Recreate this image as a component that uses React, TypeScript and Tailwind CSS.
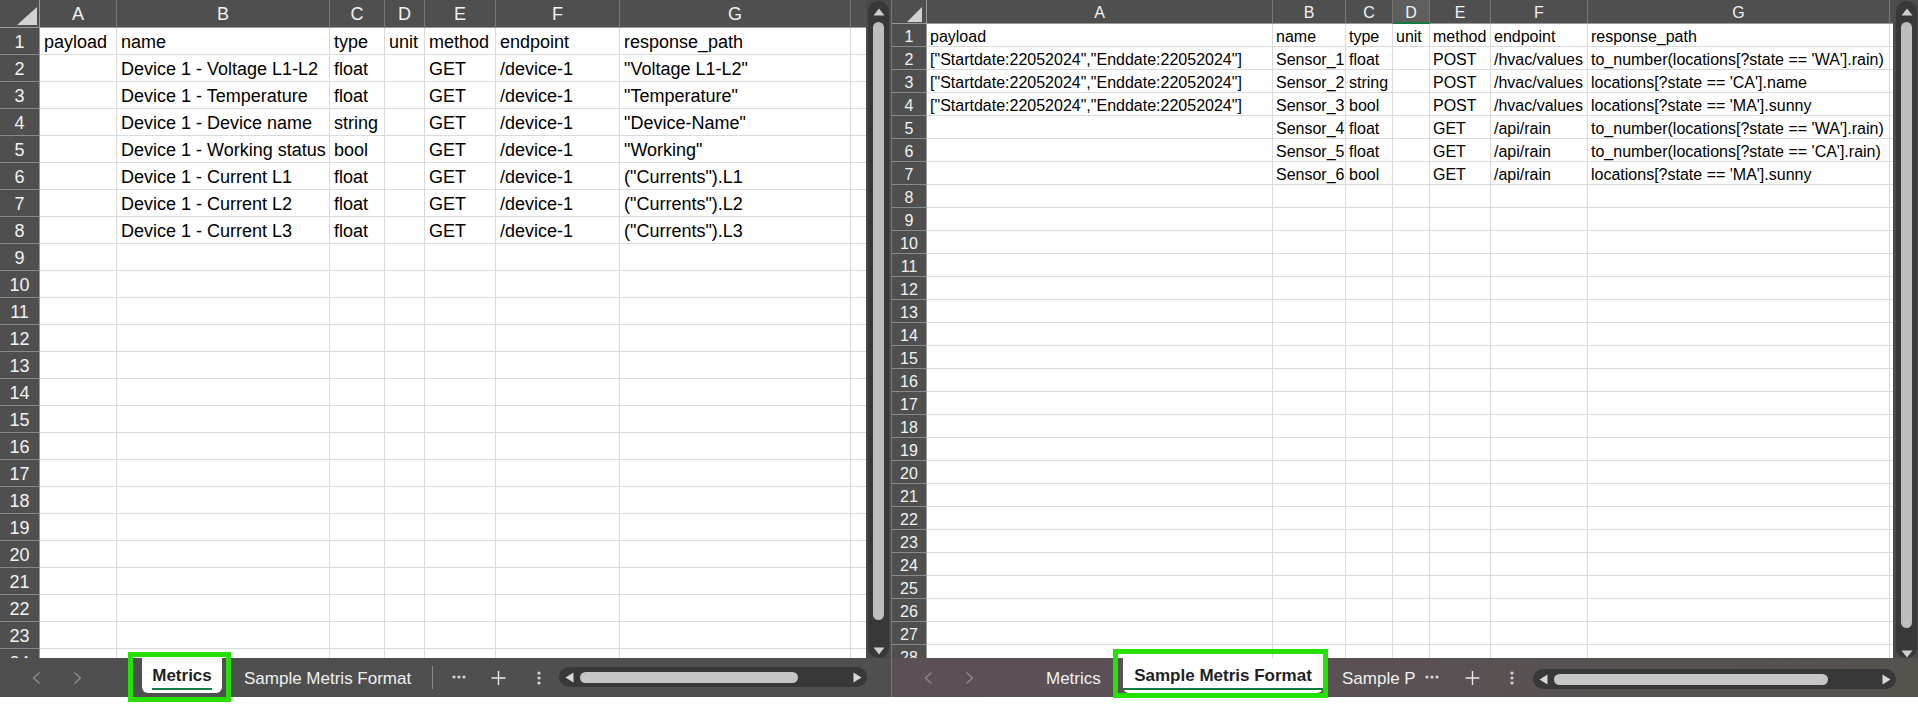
import React from 'react';
import clsx from 'clsx';

type Col = { letter: string; w: string };

// last column only peeks in at the edge, so it gets no letter
const leftCols: Col[] = [
  { letter: 'A', w: 'w-[77px]' },
  { letter: 'B', w: 'w-[213px]' },
  { letter: 'C', w: 'w-[55px]' },
  { letter: 'D', w: 'w-[40px]' },
  { letter: 'E', w: 'w-[71px]' },
  { letter: 'F', w: 'w-[124px]' },
  { letter: 'G', w: 'w-[231px]' },
  { letter: '', w: 'w-[80px]' },
];

const rightCols: Col[] = [
  { letter: 'A', w: 'w-[346px]' },
  { letter: 'B', w: 'w-[73px]' },
  { letter: 'C', w: 'w-[47px]' },
  { letter: 'D', w: 'w-[37px]' },
  { letter: 'E', w: 'w-[61px]' },
  { letter: 'F', w: 'w-[97px]' },
  { letter: 'G', w: 'w-[302px]' },
  { letter: '', w: 'w-[80px]' },
];

const leftRows: string[][] = [
  ['payload', 'name', 'type', 'unit', 'method', 'endpoint', 'response_path'],
  ['', 'Device 1 - Voltage L1-L2', 'float', '', 'GET', '/device-1', '"Voltage L1-L2"'],
  ['', 'Device 1 - Temperature', 'float', '', 'GET', '/device-1', '"Temperature"'],
  ['', 'Device 1 - Device name', 'string', '', 'GET', '/device-1', '"Device-Name"'],
  ['', 'Device 1 - Working status', 'bool', '', 'GET', '/device-1', '"Working"'],
  ['', 'Device 1 - Current L1', 'float', '', 'GET', '/device-1', '("Currents").L1'],
  ['', 'Device 1 - Current L2', 'float', '', 'GET', '/device-1', '("Currents").L2'],
  ['', 'Device 1 - Current L3', 'float', '', 'GET', '/device-1', '("Currents").L3'],
];

const payload = '["Startdate:22052024","Enddate:22052024"]';

const rightRows: string[][] = [
  ['payload', 'name', 'type', 'unit', 'method', 'endpoint', 'response_path'],
  [payload, 'Sensor_1', 'float', '', 'POST', '/hvac/values', "to_number(locations[?state == 'WA'].rain)"],
  [payload, 'Sensor_2', 'string', '', 'POST', '/hvac/values', "locations[?state == 'CA'].name"],
  [payload, 'Sensor_3', 'bool', '', 'POST', '/hvac/values', "locations[?state == 'MA'].sunny"],
  ['', 'Sensor_4', 'float', '', 'GET', '/api/rain', "to_number(locations[?state == 'WA'].rain)"],
  ['', 'Sensor_5', 'float', '', 'GET', '/api/rain', "to_number(locations[?state == 'CA'].rain)"],
  ['', 'Sensor_6', 'bool', '', 'GET', '/api/rain', "locations[?state == 'MA'].sunny"],
];

const sizes = {
  big: {
    rowHdr: 'w-[40px]',
    head: 'h-[28px] leading-[29px] text-[18px]',
    row: 'h-[27px] leading-[29px] text-[18px]',
    pad: 'pl-[4px]',
    corner: 'M37 7 L37 25 L17 25 Z',
  },
  small: {
    rowHdr: 'w-[35px]',
    head: 'h-[24px] leading-[25px] text-[16px]',
    row: 'h-[23px] leading-[25px] text-[16px]',
    pad: 'pl-[3px]',
    corner: 'M30 7 L30 22 L15 22 Z',
  },
};

interface SheetProps {
  cols: Col[];
  rows: string[][];
  rowCount: number;
  size: 'big' | 'small';
  activeCol?: string;
}

const Sheet: React.FC<SheetProps> = ({ cols, rows, rowCount, size, activeCol }) => {
  const s = sizes[size];
  return (
    <div className="h-[658px] flex-1 overflow-hidden bg-white">
      {/* column letters */}
      <div className={clsx('flex', s.head)}>
        <div className={clsx(s.rowHdr, 'relative shrink-0 border-r border-b border-[#9a9a9a] bg-[#4f4f4f]')}>
          <svg className="absolute inset-0" width="40" height="28">
            <path d={s.corner} fill="#d2d2d2" />
          </svg>
        </div>
        {cols.map((c, j) => (
          <div
            key={j}
            className={clsx(
              c.w,
              'shrink-0 border-r border-r-[#767676] text-center text-[#f2f2f2]',
              c.letter && c.letter === activeCol
                ? 'border-b-2 border-b-[#107c41] bg-[#5e5e5e]'
                : 'border-b border-b-[#9a9a9a] bg-[#4f4f4f]'
            )}
          >
            {c.letter}
          </div>
        ))}
      </div>

      {/* rows */}
      {Array.from({ length: rowCount }).map((_, i) => (
        <div key={i} className={clsx('flex', s.row)}>
          <div
            className={clsx(
              s.rowHdr,
              'shrink-0 border-r border-r-[#9a9a9a] border-b border-b-[#8a8a8a] bg-[#4f4f4f] text-center text-[#f2f2f2]'
            )}
          >
            {i + 1}
          </div>
          {cols.map((c, j) => (
            <div
              key={j}
              className={clsx(
                c.w,
                s.pad,
                'shrink-0 overflow-hidden whitespace-nowrap border-r border-b border-[#dadada] text-black'
              )}
            >
              {rows[i]?.[j] ?? ''}
            </div>
          ))}
        </div>
      ))}
    </div>
  );
};

const VScroll: React.FC<{ thumb: string; gap: string; offset: string }> = ({ thumb, gap, offset }) => (
  <div className="h-[658px] w-[25px] shrink-0 bg-[#4a4a4a] pt-[1px]">
    <div className={clsx(offset, 'flex h-[657px] w-[21px] flex-col items-center rounded-full bg-[#383838] pt-[7px]')}>
      <svg width="12" height="8" viewBox="0 0 12 8">
        <path d="M6 0.5 L11.5 7.5 L0.5 7.5 Z" fill="#cfcfcf" />
      </svg>
      <div className={clsx(thumb, 'mt-[6px] w-[11px] rounded-full bg-[#bdbdbd]')} />
      <svg className={gap} width="12" height="8" viewBox="0 0 12 8">
        <path d="M0.5 0.5 L11.5 0.5 L6 7.5 Z" fill="#cfcfcf" />
      </svg>
    </div>
  </div>
);

const Chevron = ({ dir }: { dir: 'l' | 'r' }) => (
  <svg width="9" height="12" viewBox="0 0 9 12" fill="none">
    <polyline
      points={dir === 'l' ? '7.5,0.5 1.5,6 7.5,11.5' : '1.5,0.5 7.5,6 1.5,11.5'}
      stroke="#8e8e8e"
      strokeWidth="1.2"
    />
  </svg>
);

const Nav = () => (
  <div className="flex h-full w-[128px] shrink-0 items-start pt-[14px]">
    <div className="ml-[32px]">
      <Chevron dir="l" />
    </div>
    <div className="ml-[32px]">
      <Chevron dir="r" />
    </div>
  </div>
);

const Dots = () => (
  <svg className="mt-[17px] shrink-0" width="14" height="4" viewBox="0 0 14 4">
    <circle cx="2" cy="2" r="1.6" fill="#d6d6d6" />
    <circle cx="7" cy="2" r="1.6" fill="#d6d6d6" />
    <circle cx="12" cy="2" r="1.6" fill="#d6d6d6" />
  </svg>
);

const Plus = () => (
  <svg className="mt-[13px] shrink-0" width="15" height="14" viewBox="0 0 15 14">
    <path d="M7.5 0 V14 M0.5 7 H14.5" stroke="#e8e8e8" strokeWidth="1.4" />
  </svg>
);

const VDots = () => (
  <svg className="mt-[13px] shrink-0" width="4" height="14" viewBox="0 0 4 14">
    <circle cx="2" cy="2" r="1.6" fill="#d6d6d6" />
    <circle cx="2" cy="7" r="1.6" fill="#d6d6d6" />
    <circle cx="2" cy="12" r="1.6" fill="#d6d6d6" />
  </svg>
);

const HScroll: React.FC<{ w: string; thumb: string; top: string }> = ({ w, thumb, top }) => (
  <div className={clsx(w, top, 'flex h-[20px] shrink-0 items-center rounded-full bg-[#383838] pl-[6px] pr-[5px]')}>
    <svg width="9" height="11" viewBox="0 0 9 11">
      <path d="M8.5 0.5 L8.5 10.5 L0.5 5.5 Z" fill="#d8d8d8" />
    </svg>
    <div className={clsx(thumb, 'ml-[6px] h-[11px] rounded-full bg-[#c6c6c6]')} />
    <svg className="ml-auto" width="9" height="11" viewBox="0 0 9 11">
      <path d="M0.5 0.5 L0.5 10.5 L8.5 5.5 Z" fill="#d8d8d8" />
    </svg>
  </div>
);

const ActiveTab: React.FC<{ label: string; tab: string; box: string }> = ({ label, tab, box }) => (
  <div className="relative h-full shrink-0">
    <div className={clsx(tab, 'flex h-[35px] flex-col items-center rounded-b-[6px] bg-white pt-[8px]')}>
      <span className="text-[17px] font-bold leading-[20px] text-[#1f1f1f]">{label}</span>
      <div className="mt-[2px] h-[2px] w-full bg-[#107c41]" />
    </div>
    {/* highlight box around the active sheet tab */}
    <div className={clsx(box, 'absolute border-[5px] border-[#25e000]')} />
  </div>
);

export default function App() {
  return (
    <div className="flex h-[704px] w-[1918px] flex-col overflow-hidden bg-white font-['Liberation_Sans',Arial,sans-serif]">
      <div className="flex h-[697px]">
        {/* left window */}
        <div className="flex w-[891px] shrink-0 flex-col">
          <div className="flex h-[658px]">
            <Sheet cols={leftCols} rows={leftRows} rowCount={24} size="big" />
            <VScroll thumb="h-[598px]" gap="mt-[27px]" offset="ml-[2px]" />
          </div>
          <div className="flex h-[39px] items-start bg-[#4f4f4f]">
            <Nav />
            <div className="w-[103px] shrink-0">
              <ActiveTab
                label="Metrics"
                tab="ml-[14px] w-[80px] px-[10px]"
                box="left-0 top-[-6px] h-[50px] w-[103px]"
              />
            </div>
            <div className="w-[201px] shrink-0 pl-[13px] pt-[11px] text-[17px] leading-[20px] whitespace-nowrap text-[#f0f0f0]">
              Sample Metris Format
            </div>
            <div className="mt-[8px] h-[23px] w-px shrink-0 bg-[#8a8a8a]" />
            <div className="ml-[19px] flex">
              <Dots />
            </div>
            <div className="ml-[25px] flex">
              <Plus />
            </div>
            <div className="ml-[31px] flex">
              <VDots />
            </div>
            <div className="ml-[18px] flex">
              <HScroll w="w-[308px]" thumb="w-[218px]" top="mt-[9px]" />
            </div>
          </div>
        </div>

        <div className="w-px shrink-0 bg-[#7a7a7a]" />

        {/* right window */}
        <div className="flex w-[1026px] shrink-0 flex-col">
          <div className="flex h-[658px]">
            <Sheet cols={rightCols} rows={rightRows} rowCount={28} size="small" activeCol="D" />
            <VScroll thumb="h-[607px]" gap="mt-[22px]" offset="ml-[3px]" />
          </div>
          <div className="flex h-[39px] items-start bg-linear-to-r from-[#5c5058] to-[#56524e]">
            <Nav />
            <div className="w-[93px] shrink-0 pl-[26px] pt-[11px] text-[17px] leading-[20px] text-[#f0f0f0]">Metrics</div>
            <div className="w-[215px] shrink-0">
              <ActiveTab
                label="Sample Metris Format"
                tab="ml-[10px] w-[200px]"
                box="left-0 top-[-9px] h-[49px] w-[215px]"
              />
            </div>
            <div className="w-[97px] shrink-0 overflow-hidden whitespace-nowrap pl-[14px] pt-[11px] text-[17px] leading-[20px] text-[#f0f0f0]">
              Sample P
            </div>
            <Dots />
            <div className="ml-[26px] flex">
              <Plus />
            </div>
            <div className="ml-[30px] flex">
              <VDots />
            </div>
            <div className="ml-[19px] flex">
              <HScroll w="w-[363px]" thumb="w-[274px]" top="mt-[11px]" />
            </div>
          </div>
        </div>
      </div>
      <div className="h-[7px] bg-white" />
    </div>
  );
}
